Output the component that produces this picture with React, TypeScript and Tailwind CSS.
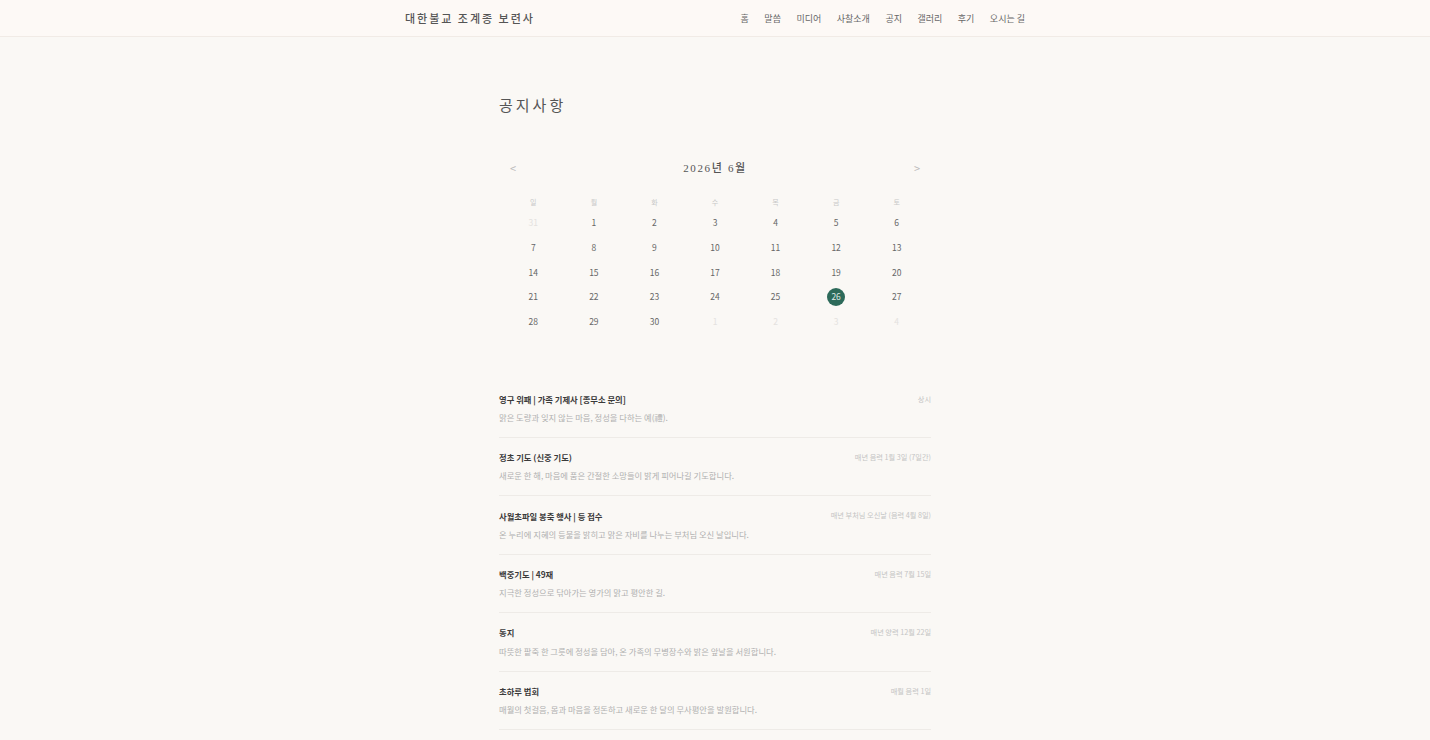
import React from 'react';

const NAV = ['홈', '말씀', '미디어', '사찰소개', '공지', '갤러리', '후기', '오시는 길'];
const WEEK = ['일', '월', '화', '수', '목', '금', '토'];

type Day = { n: number; muted?: boolean };

const DAYS: Day[] = [
  { n: 31, muted: true },
  ...Array.from({ length: 30 }, (_, i) => ({ n: i + 1 })),
  { n: 1, muted: true },
  { n: 2, muted: true },
  { n: 3, muted: true },
  { n: 4, muted: true },
];

const NOTICES = [
  { title: '영구 위패 | 가족 기제사 [종무소 문의]', date: '상시', desc: '맑은 도량과 잊지 않는 마음, 정성을 다하는 예(禮).' },
  { title: '정초 기도 (신중 기도)', date: '매년 음력 1월 3일 (7일간)', desc: '새로운 한 해, 마음에 품은 간절한 소망들이 밝게 피어나길 기도합니다.' },
  { title: '사월초파일 봉축 행사 | 등 접수', date: '매년 부처님 오신날 (음력 4월 8일)', desc: '온 누리에 지혜의 등불을 밝히고 맑은 자비를 나누는 부처님 오신 날입니다.' },
  { title: '백중기도 | 49재', date: '매년 음력 7월 15일', desc: '지극한 정성으로 닦아가는 영가의 맑고 평안한 길.' },
  { title: '동지', date: '매년 양력 12월 22일', desc: '따뜻한 팥죽 한 그릇에 정성을 담아, 온 가족의 무병장수와 밝은 앞날을 서원합니다.' },
  { title: '초하루 법회', date: '매월 음력 1일', desc: '매월의 첫걸음, 몸과 마음을 정돈하고 새로운 한 달의 무사평안을 발원합니다.' },
];

const sans = { fontFamily: '"Noto Sans CJK KR", "Noto Sans", sans-serif' };

export default function App() {
  return (
    <div className="min-h-screen bg-[#faf8f5] text-[#444]" style={sans}>
      {/* Header */}
      <header className="h-[37px] bg-[#fdf9f6] border-b border-[#f1ebe6]">
        <div className="mx-auto w-[620px] h-full pt-[1px] flex items-center justify-between">
          <div className="text-[11px] tracking-[0.18em] text-[#555] font-medium">대한불교 조계종 보련사</div>
          <nav className="flex items-center gap-[15.5px] text-[9px] text-[#666]">
            {NAV.map(n => (
              <span key={n}>{n}</span>
            ))}
          </nav>
        </div>
      </header>

      <main className="mx-auto w-[432px]">
        <h1 className="pt-[57px] text-[15px] tracking-[0.2em] text-[#555] leading-[22px]">공지사항</h1>

        {/* Calendar */}
        <section className="mt-[42px] px-[4px]">
          <div className="flex items-center justify-between px-[7px] h-[20px]">
            <span className="text-[11px] text-[#bbb]">&lt;</span>
            <span className="text-[11px] tracking-[0.15em] text-[#555] font-medium" style={{ fontFamily: '"Liberation Serif", "Noto Sans CJK KR", serif' }}>
              2026년 6월
            </span>
            <span className="text-[11px] text-[#bbb]">&gt;</span>
          </div>
          <div className="grid grid-cols-7 mt-[17px] text-[7px] text-[#c8c8c8] h-[14px] items-center">
            {WEEK.map(w => (
              <div key={w} className="text-center">{w}</div>
            ))}
          </div>
          <div className="grid grid-cols-7 mt-[1px]">
            {DAYS.map((d, i) => (
              <div key={i} className="h-[24.8px] flex items-center justify-center">
                {d.n === 26 && !d.muted ? (
                  <span className="w-[18px] h-[18px] rounded-full bg-[#2d6a5a] text-[#dfe9e5] text-[8.5px] flex items-center justify-center">26</span>
                ) : (
                  <span className={'text-[8.5px] ' + (d.muted ? 'text-[#e4e2df]' : 'text-[#666]')}>{d.n}</span>
                )}
              </div>
            ))}
          </div>
        </section>

        {/* Notices */}
        <section className="mt-[49px]">
          {NOTICES.map(n => (
            <div key={n.title} className="pt-[8px] pb-[12px] border-b border-[#eeebe7] mb-[3.4px]">
              <div className="flex items-center justify-between h-[16px]">
                <span className="text-[8.3px] font-semibold text-[#3a3a3a]">{n.title}</span>
                <span className="text-[7.2px] text-[#c4c4c4]">{n.date}</span>
              </div>
              <div className="mt-[2px] text-[8.3px] text-[#b0b0b0] leading-[16px]">{n.desc}</div>
            </div>
          ))}
        </section>
      </main>
    </div>
  );
}
